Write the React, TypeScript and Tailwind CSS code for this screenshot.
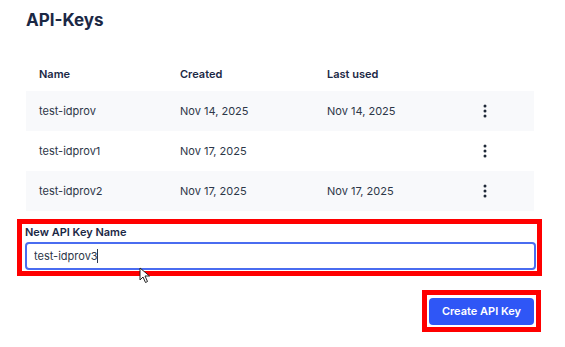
import React, { useState } from 'react';

interface ApiKey {
    name: string;
    created: string;
    lastUsed: string;
}

const keys: ApiKey[] = [
    { name: 'test-idprov', created: 'Nov 14, 2025', lastUsed: 'Nov 14, 2025' },
    { name: 'test-idprov1', created: 'Nov 17, 2025', lastUsed: '' },
    { name: 'test-idprov2', created: 'Nov 17, 2025', lastUsed: 'Nov 17, 2025' },
];

const KebabIcon: React.FC = () => (
    <svg width="4" height="14" viewBox="0 0 4 14" className="text-[#1f2937]">
        <circle cx="2" cy="2" r="1.5" fill="currentColor" />
        <circle cx="2" cy="7" r="1.5" fill="currentColor" />
        <circle cx="2" cy="12" r="1.5" fill="currentColor" />
    </svg>
);

const PointerIcon: React.FC = () => (
    <svg width="12" height="17" viewBox="0 0 12 17">
        <path d="M1 1 L1 13 L4 10 L6.5 15.5 L8.5 14.5 L6 9 L10.5 9 Z" fill="#fff" stroke="#222" strokeWidth="1" strokeLinejoin="round" />
    </svg>
);

const App: React.FC = () => {
    const [newName, setNewName] = useState('test-idprov3');

    return (
        <div className="w-[565px] h-[347px] bg-white font-['Inter',sans-serif] text-[#1f2a44] relative overflow-hidden">
            <div className="pl-[26px] pr-[31px] pt-[9px]">
                <h1 className="text-[17px] font-bold leading-[22px] text-[#1b2845]">API-Keys</h1>

                <div className="mt-[26px]">
                    <div className="flex h-[34px] items-center text-[11px] font-semibold text-[#1b2845]">
                        <div className="w-[154px] pl-[13px]">Name</div>
                        <div className="w-[147px]">Created</div>
                        <div className="w-[140px]">Last used</div>
                    </div>
                    {keys.map((k, idx) => (
                        <div
                            key={k.name}
                            className={`flex h-[40px] items-center text-[11px] text-[#2d3748] ${idx % 2 === 0 ? 'bg-[#f8f9fb]' : 'bg-white'}`}
                        >
                            <div className="w-[154px] pl-[13px]">{k.name}</div>
                            <div className="w-[147px]">{k.created}</div>
                            <div className="w-[156px]">{k.lastUsed}</div>
                            <div className="flex items-center"><KebabIcon /></div>
                        </div>
                    ))}
                </div>
            </div>

            <div className="mx-[17px] mt-[8px] w-[525px] border-[5px] border-[#ff0000] px-[3px] pt-[1px] pb-[1px]">
                <label className="block text-[11px] font-semibold leading-[14px] text-[#1b2845]">New API Key Name</label>
                <div className="relative mt-[3px]">
                    <input
                        value={newName}
                        onChange={e => setNewName(e.target.value)}
                        className="block h-[28px] w-[511px] rounded-[4px] border-2 border-[#4a6cf0] px-[7px] text-[11px] text-[#2d3748] outline-none"
                    />
                    <span className="absolute left-[72px] top-[7px] h-[14px] w-px bg-[#2d3748]" />
                </div>
            </div>

            <div className="flex justify-end pr-[24px] mt-[14px]">
                <div className="border-[5px] border-[#ff0000] p-[2px]">
                    <button className="h-[27px] w-[105px] rounded-[4px] bg-[#2f56f6] text-[11px] font-semibold text-white">
                        Create API Key
                    </button>
                </div>
            </div>

            <div className="absolute left-[139px] top-[267px]">
                <PointerIcon />
            </div>
        </div>
    );
};

export default App;
